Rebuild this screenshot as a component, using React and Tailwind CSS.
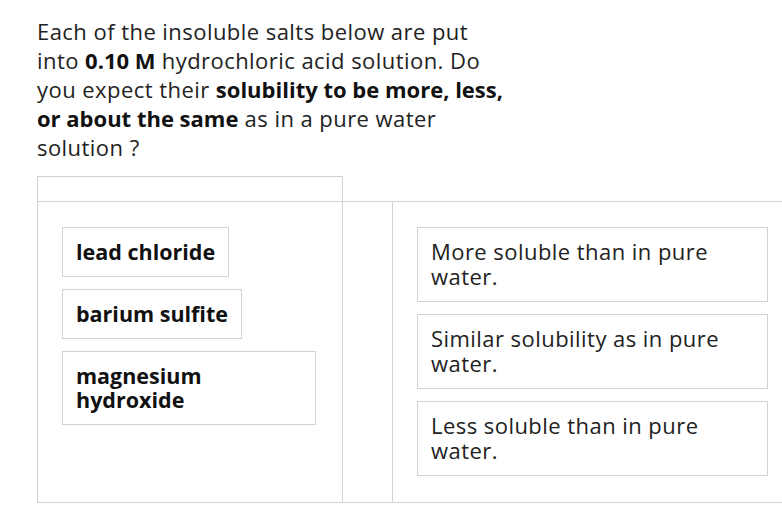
export default function App() {
  const font = { fontFamily: "'Open Sans', Lato, sans-serif" };
  const left = [
    { t: ["lead chloride"], w: "" },
    { t: ["barium sulfite"], w: "" },
    { t: ["magnesium", "hydroxide"], w: "w-[254px]" },
  ];
  const right = [
    ["More soluble than in pure", "water."],
    ["Similar solubility as in pure", "water."],
    ["Less soluble than in pure", "water."],
  ];
  return (
    <div className="w-[782px] h-[512px] overflow-hidden bg-white text-[#222]" style={font}>
      <div className="pl-[37px] pt-[17px]">
        <p className="text-[22px] leading-[29px] tracking-[0.45px] whitespace-nowrap">
          Each of the insoluble salts below are put
          <br />
          into <b className="font-bold text-[#111] tracking-normal">0.10 M</b> hydrochloric acid solution. Do
          <br />
          you expect their <b className="font-bold text-[#111] tracking-normal">solubility to be more, less,</b>
          <br />
          <b className="font-bold text-[#111] tracking-normal">or about the same</b> as in a pure water
          <br />
          solution ?
        </p>
        <div className="mt-[14px] flex h-[327px]">
          <div className="w-[306px] shrink-0 flex flex-col border border-[#d2d2d2]">
            <div className="h-[25px] border-b border-[#d2d2d2]" />
            <div className="flex-1 pl-[24px] pt-[25px] flex flex-col items-start gap-[12px]">
              {left.map((it, i) => (
                <div
                  key={i}
                  className={`border border-[#d2d2d2] pl-[13px] pr-[13px] pt-[12px] pb-[12px] text-[21.5px] leading-[24px] font-bold text-[#111] whitespace-nowrap ${it.w}`}
                >
                  {it.t.map((l, j) => (
                    <div key={j}>{l}</div>
                  ))}
                </div>
              ))}
            </div>
          </div>
          <div className="w-[49px] shrink-0 mt-[25px] border-t border-b border-[#d2d2d2]" />
          <div className="w-[400px] shrink-0 mt-[25px] border-t border-b border-l border-[#d2d2d2] pl-[24px] pt-[25px] flex flex-col gap-[12px]">
            {right.map((r, i) => (
              <div
                key={i}
                className="w-[351px] h-[75px] border border-[#d2d2d2] pl-[13px] pt-[11px] text-[22px] leading-[25px] tracking-[0.45px] whitespace-nowrap"
              >
                {r.map((l, j) => (
                  <div key={j}>{l}</div>
                ))}
              </div>
            ))}
          </div>
        </div>
      </div>
    </div>
  );
}
